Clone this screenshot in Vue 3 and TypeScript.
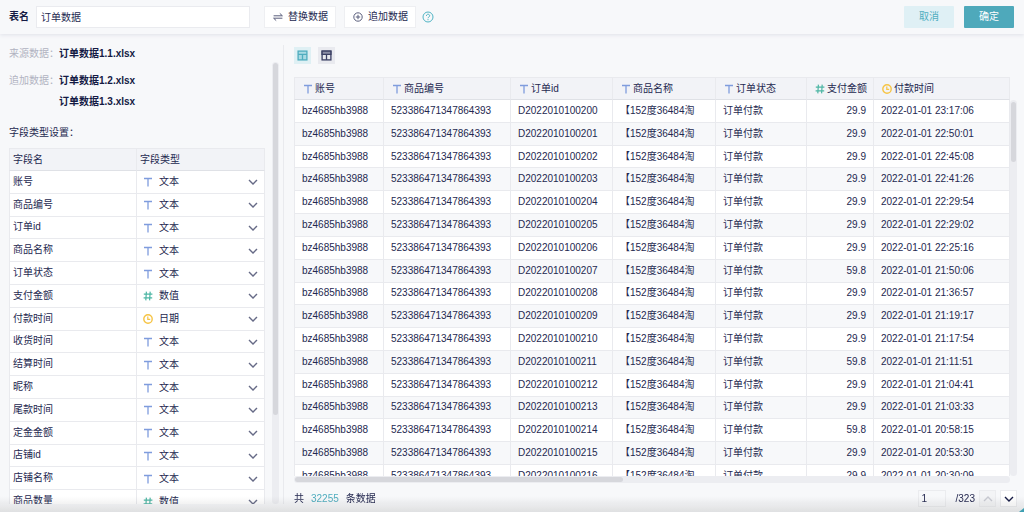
<script setup lang="ts">
import { ref } from 'vue'

type Kind = 'text' | 'number' | 'date'

interface Field {
  name: string
  kind: Kind
}

interface Column {
  title: string
  kind: Kind
  css: string
}

const tableName = ref('订单数据')
const page = ref('1')
const total = 32255

const fields = ref<Field[]>([
  { name: '账号', kind: 'text' },
  { name: '商品编号', kind: 'text' },
  { name: '订单id', kind: 'text' },
  { name: '商品名称', kind: 'text' },
  { name: '订单状态', kind: 'text' },
  { name: '支付金额', kind: 'number' },
  { name: '付款时间', kind: 'date' },
  { name: '收货时间', kind: 'text' },
  { name: '结算时间', kind: 'text' },
  { name: '昵称', kind: 'text' },
  { name: '尾款时间', kind: 'text' },
  { name: '定金金额', kind: 'text' },
  { name: '店铺id', kind: 'text' },
  { name: '店铺名称', kind: 'text' },
  { name: '商品数量', kind: 'number' },
])

const columns: Column[] = [
  { title: '账号', kind: 'text', css: 'c-account' },
  { title: '商品编号', kind: 'text', css: 'c-sku' },
  { title: '订单id', kind: 'text', css: 'c-order' },
  { title: '商品名称', kind: 'text', css: 'c-name' },
  { title: '订单状态', kind: 'text', css: 'c-status' },
  { title: '支付金额', kind: 'number', css: 'c-amount' },
  { title: '付款时间', kind: 'date', css: 'c-time' },
]

const payments: [string, string][] = [
  ['29.9', '23:17:06'],
  ['29.9', '22:50:01'],
  ['29.9', '22:45:08'],
  ['29.9', '22:41:26'],
  ['29.9', '22:29:54'],
  ['29.9', '22:29:02'],
  ['29.9', '22:25:16'],
  ['59.8', '21:50:06'],
  ['29.9', '21:36:57'],
  ['29.9', '21:19:17'],
  ['29.9', '21:17:54'],
  ['59.8', '21:11:51'],
  ['29.9', '21:04:41'],
  ['29.9', '21:03:33'],
  ['59.8', '20:58:15'],
  ['29.9', '20:53:30'],
  ['29.9', '20:30:09'],
]

const rows = payments.map(([amount, time], i) => [
  'bz4685hb3988',
  '523386471347864393',
  `D${2022010100200 + i}`,
  '【152度36484淘',
  '订单付款',
  amount,
  `2022-01-01 ${time}`,
])
</script>

<template>
  <div class="app">
    <svg class="defs" aria-hidden="true">
      <symbol id="i-text" viewBox="0 0 10 10">
        <path d="M1 1.5H9M5 1.5V9.5" fill="none" stroke="#7f9cdd" stroke-width="1.3" />
      </symbol>
      <symbol id="i-number" viewBox="0 0 10 10">
        <path d="M3.4 .6L2.8 9.4M7.2 .6L6.6 9.4M.8 3.2H9.4M.6 6.8H9.2" fill="none" stroke="#4db6a4" stroke-width="1.2" />
      </symbol>
      <symbol id="i-date" viewBox="0 0 10 10">
        <circle cx="5" cy="5" r="4.2" fill="none" stroke="#f6c445" stroke-width="1.4" />
        <path d="M4.8 2.6V5.3H7.2" fill="none" stroke="#f6c445" stroke-width="1.2" />
      </symbol>
    </svg>

    <header class="topbar">
      <label class="name-label" for="table-name">表名</label>
      <input id="table-name" v-model="tableName" class="name-input" type="text" />
      <button class="tool" type="button">
        <svg viewBox="0 0 10 10" aria-hidden="true">
          <path d="M.6 3.8H9.4L6.8 1.4M9.4 6.2H.6L3.2 8.6" />
        </svg>
        替换数据
      </button>
      <button class="tool" type="button">
        <svg viewBox="0 0 10 10" aria-hidden="true">
          <circle cx="5" cy="5" r="4.2" />
          <path d="M5 2.8V7.2M2.8 5H7.2" />
        </svg>
        追加数据
      </button>
      <button class="help" type="button" aria-label="帮助">
        <svg viewBox="0 0 12 12" aria-hidden="true">
          <circle cx="6" cy="6" r="5" />
          <path d="M4.4 4.9C4.4 2.7 7.7 2.7 7.7 4.8C7.7 6 6 6 6 7.2M6 8.1V9.2" />
        </svg>
      </button>
      <div class="actions">
        <button class="action cancel" type="button">取消</button>
        <button class="action confirm" type="button">确定</button>
      </div>
    </header>

    <main class="body">
      <aside class="side">
        <div class="side-scroll">
          <dl class="sources">
            <dt>来源数据：</dt>
            <dd>订单数据1.1.xlsx</dd>
            <dt class="next">追加数据：</dt>
            <dd class="next">订单数据1.2.xlsx</dd>
            <dd class="more">订单数据1.3.xlsx</dd>
          </dl>
          <h2>字段类型设置：</h2>
          <table class="fields">
            <thead>
              <tr>
                <th>字段名</th>
                <th>字段类型</th>
              </tr>
            </thead>
            <tbody>
              <tr v-for="(field, i) in fields" :key="field.name">
                <td><label :for="`field-${i}`">{{ field.name }}</label></td>
                <td>
                  <div class="picker">
                    <svg class="kind" aria-hidden="true"><use :href="`#i-${field.kind}`" /></svg>
                    <select :id="`field-${i}`" v-model="field.kind">
                      <option value="text">文本</option>
                      <option value="number">数值</option>
                      <option value="date">日期</option>
                    </select>
                    <svg class="chevron" viewBox="0 0 10 10" aria-hidden="true"><path d="M1 3L5 7L9 3" /></svg>
                  </div>
                </td>
              </tr>
            </tbody>
          </table>
        </div>
        <div class="side-track"><div class="side-thumb"></div></div>
      </aside>

      <section class="preview">
        <div class="views">
          <button class="view active" type="button" aria-label="数据视图">
            <svg viewBox="0 0 10 10" aria-hidden="true">
              <rect class="tint" x="1" y="1" width="8" height="8" />
              <path d="M1 4H9M5 4V9" />
            </svg>
          </button>
          <button class="view" type="button" aria-label="表格视图">
            <svg viewBox="0 0 10 10" aria-hidden="true">
              <rect x="1" y="1" width="8" height="8" />
              <path class="tint" d="M1 1H9V4H1Z" />
              <path d="M5 4V9" />
            </svg>
          </button>
        </div>

        <div class="grid-wrap">
          <div class="grid-scroll">
            <table class="grid">
              <thead>
                <tr>
                  <th v-for="col in columns" :key="col.title" :class="col.css">
                    <span class="head">
                      <svg class="kind" aria-hidden="true"><use :href="`#i-${col.kind}`" /></svg>{{ col.title }}
                    </span>
                  </th>
                </tr>
              </thead>
              <tbody>
                <tr v-for="(row, r) in rows" :key="r">
                  <td v-for="(cell, c) in row" :key="c" :class="columns[c].css">{{ cell }}</td>
                </tr>
              </tbody>
            </table>
          </div>
          <div class="v-track"><div class="v-thumb"></div></div>
          <div class="h-track"><div class="h-thumb"></div></div>
        </div>

        <footer class="foot">
          <span>共</span>
          <span class="total">{{ total }}</span>
          <span>条数据</span>
          <div class="pager">
            <input v-model="page" type="text" aria-label="页码" />
            <span>/323</span>
            <button type="button" disabled aria-label="上一页">
              <svg class="chevron" viewBox="0 0 10 10" aria-hidden="true"><path d="M1 7L5 3L9 7" /></svg>
            </button>
            <button type="button" aria-label="下一页">
              <svg class="chevron" viewBox="0 0 10 10" aria-hidden="true"><path d="M1 3L5 7L9 3" /></svg>
            </button>
          </div>
        </footer>
      </section>
    </main>
    <div class="shade"></div>
    <div class="corner"></div>
  </div>
</template>

<style>
body {
  margin: 0;
  background: #f7f8fa;
}
</style>

<style scoped>
.app {
  position: relative;
  display: flex;
  flex-direction: column;
  height: 100vh;
  overflow: hidden;
  background: #f7f8fa;
  color: #242850;
  font-family: "Liberation Sans", "Noto Sans CJK SC", sans-serif;
  font-size: 10px;
  line-height: 16px;
}

.app *,
.app *::before {
  box-sizing: border-box;
}

.defs {
  position: absolute;
  width: 0;
  height: 0;
}

button,
input,
select {
  margin: 0;
  padding: 0;
  border: 0;
  color: inherit;
  font: inherit;
}

svg {
  flex: none;
  fill: none;
  stroke: currentColor;
}

.topbar {
  display: flex;
  flex: none;
  align-items: center;
  height: 34px;
  padding: 0 10px 1px 9px;
  box-shadow: 0 1px 4px #dfe1e8;
}

.name-label {
  color: #141a44;
  font-weight: 700;
}

.name-input {
  width: 214px;
  height: 22px;
  margin: 0 14px 0 7px;
  padding: 0 4px 1px;
  border: 1px solid #eaebef;
  background: #fff;
}

.tool {
  display: flex;
  align-items: center;
  gap: 5px;
  height: 22px;
  margin-right: 8px;
  padding: 0 7px 0 8px;
  border: 1px solid #eeeff2;
  background: #fff;
}

.tool svg {
  width: 10px;
  height: 10px;
  stroke: #5a5e7c;
}

.help {
  display: flex;
  margin-left: -2px;
  background: none;
  color: #4fb4c4;
}

.help svg {
  width: 12px;
  height: 12px;
}

.actions {
  display: flex;
  gap: 10px;
  margin-left: auto;
}

.action {
  width: 50px;
  height: 22px;
  border-radius: 1px;
}

.cancel {
  background: #dff0f5;
  color: #4fadbf;
}

.confirm {
  background: #4ea9bb;
  color: #fff;
}

.body {
  display: flex;
  flex: 1;
  min-height: 0;
}

.side {
  display: flex;
  flex: none;
  width: 284px;
  margin: 11px 0 8px;
  padding-left: 9px;
  border-right: 1px solid #e9eaee;
}

.side-scroll {
  flex: 1;
  padding-top: 1px;
  overflow: auto;
  scrollbar-width: none;
}

.sources {
  display: grid;
  grid-template-columns: 50px 1fr;
  margin: 0;
}

.sources dt {
  color: #b1b3c1;
}

.sources dd {
  margin: 0;
  color: #141a44;
  font-weight: 700;
}

.sources .next {
  margin-top: 11px;
}

.sources .more {
  grid-column: 2;
  margin-top: 5px;
}

h2 {
  margin: 15px 0 7px;
  font-size: 10px;
  font-weight: 400;
}

table {
  width: 100%;
  border-spacing: 0;
  table-layout: fixed;
  background: #fff;
}

th,
td {
  padding: 0;
  overflow: hidden;
  border-right: 1px solid #e9eaee;
  border-bottom: 1px solid #e9eaee;
  font-weight: 400;
  text-align: left;
  white-space: nowrap;
}

th:first-child,
td:first-child {
  border-left: 1px solid #e9eaee;
}

th {
  height: 23px;
  border-top: 1px solid #e9eaee;
  border-bottom-color: #dfe1e6;
  background: #f2f3f7;
}

.fields {
  height: 365px;
}

.fields th,
.fields td {
  padding-left: 3px;
}

.picker {
  display: flex;
  position: relative;
  align-items: center;
  padding: 1px 0 0 3px;
}

.kind {
  width: 10px;
  height: 10px;
}

.picker select {
  flex: 1;
  height: 16px;
  margin-left: -10px;
  padding-left: 16px;
  appearance: none;
  background: none;
}

.picker .chevron {
  position: absolute;
  right: 6px;
  pointer-events: none;
}

.chevron {
  width: 10px;
  height: 10px;
  stroke: #666a86;
  stroke-width: 1.4;
}

.side-track {
  width: 7px;
  margin: 17px 4px 0 7px;
  padding: 1px;
  border-radius: 4px;
  background: #ecedf1;
}

.side-thumb {
  height: 80%;
  border-radius: 3px;
  background: #d6d7dc;
}

.preview {
  display: flex;
  flex: 1;
  flex-direction: column;
  min-width: 0;
  padding: 13px 7px 5px 10px;
}

.views {
  display: flex;
  flex: none;
  gap: 7px;
  margin-bottom: 13px;
}

.view {
  display: flex;
  align-items: center;
  justify-content: center;
  width: 17px;
  height: 17px;
  background: #e9eaef;
  color: #3c4064;
}

.view.active {
  background: #dff0f4;
  color: #4fadbf;
}

.view svg {
  width: 11px;
  height: 11px;
  stroke-width: 1.2;
}

.view .tint {
  fill: #8b8ea6;
}

.view.active .tint {
  fill: #a9dbe4;
}

.grid-wrap {
  display: grid;
  flex: 1;
  grid-template-columns: 1fr 7px;
  grid-template-rows: 1fr 7px;
  min-height: 0;
}

.grid-scroll {
  min-height: 0;
  overflow: auto;
  scrollbar-width: none;
}

.grid {
  height: 411px;
}

.grid th {
  padding-left: 8px;
}

.grid td {
  padding-left: 7px;
}

.grid tbody tr:nth-child(even) {
  background: #f7f8fa;
}

.head {
  display: flex;
  align-items: center;
  gap: 2px;
}

.c-account { width: 90px; }
.c-sku { width: 127px; }
.c-order { width: 102px; }
.c-name { width: 103px; }
.c-status { width: 91px; }
.c-amount { width: 67px; }

.grid td.c-amount {
  padding-right: 7px;
  text-align: right;
}

.v-track {
  margin-top: 23px;
  padding: 2px 1px;
  border-radius: 4px;
  background: #ecedf1;
}

.v-thumb {
  height: 16%;
  border-radius: 3px;
  background: #d6d7dc;
}

.h-track {
  padding: 1px;
  border-radius: 4px;
  background: #ecedf1;
}

.h-thumb {
  width: 46%;
  height: 5px;
  border-radius: 3px;
  background: #d6d7dc;
}

.foot {
  display: flex;
  flex: none;
  align-items: center;
  gap: 7px;
  height: 17px;
  margin-top: 7px;
}

.total {
  color: #4fadbf;
}

.pager {
  display: flex;
  align-items: center;
  margin-left: auto;
}

.pager input {
  width: 28px;
  height: 17px;
  margin-right: 10px;
  padding: 0 3px;
  border: 1px solid #ebecef;
  background: #f7f8fa;
}

.pager button {
  display: flex;
  align-items: center;
  justify-content: center;
  width: 17px;
  height: 17px;
  margin-left: 4px;
  border: 1px solid #ebecef;
  background: #fff;
}

.pager button:disabled {
  background: #f3f4f6;
}

.pager .chevron {
  stroke: #141a44;
}

.pager button:disabled .chevron {
  stroke: #c8cad2;
}

.shade {
  position: absolute;
  right: 0;
  bottom: 0;
  left: 0;
  height: 16px;
  background: linear-gradient(to bottom, rgba(120, 120, 120, 0), rgba(120, 120, 120, 0.18));
  pointer-events: none;
}

.corner {
  position: absolute;
  right: 0;
  bottom: 0;
  width: 5px;
  height: 4px;
  background: #3d9fb2;
  clip-path: polygon(100% 0, 100% 100%, 0 100%);
}
</style>
